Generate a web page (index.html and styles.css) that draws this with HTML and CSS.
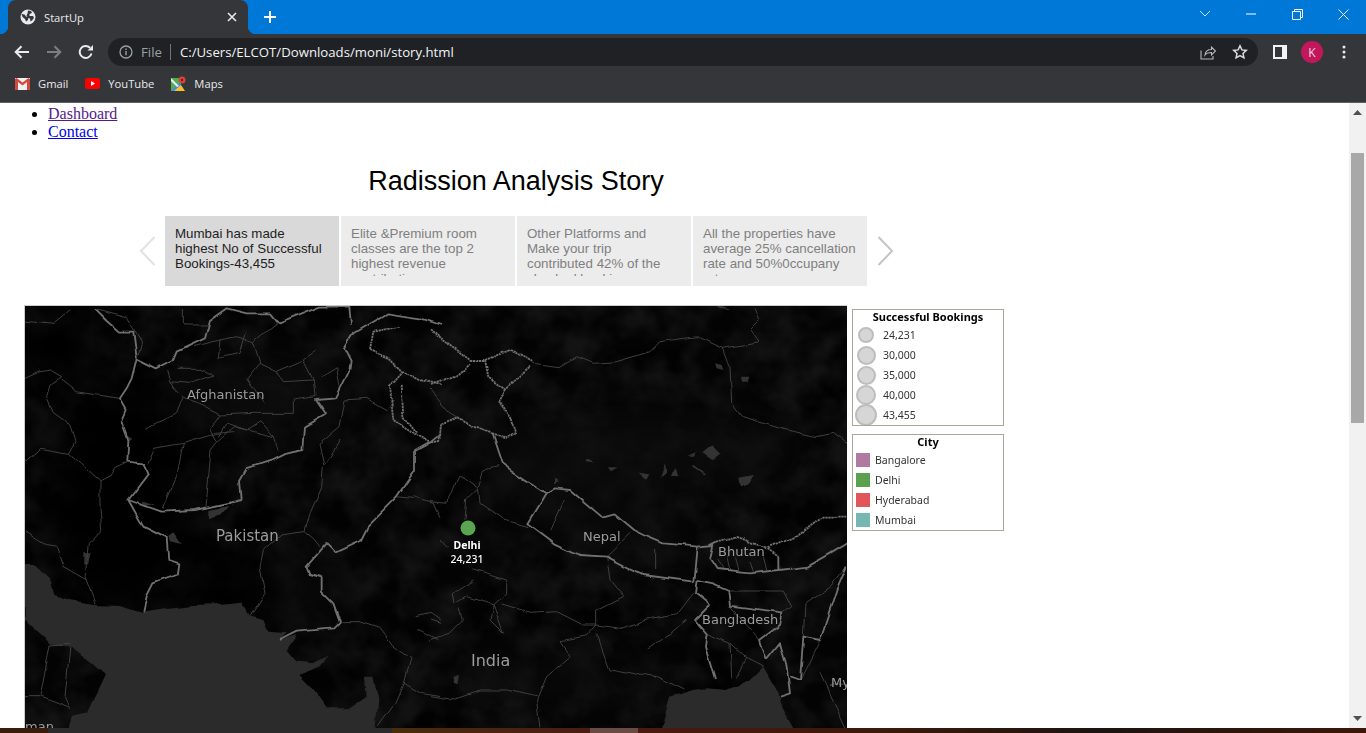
FILE: index.html
```html
<!DOCTYPE html>
<html lang="en">
  <head>
    <meta charset="UTF-8" />
    <meta name="viewport" content="width=device-width, initial-scale=1.0" />
    <title>StartUp</title>
    <link rel="stylesheet" href="styles.css">
  </head>

  <body>
    <div class="window">
      <!-- title bar -->
      <div class="tabbar">
        <div class="tab">
          <svg class="globe" width="16" height="16" viewBox="0 0 16 16"><circle cx="8" cy="8" r="7.500" fill="#e8eaed"/><path d="M1.500 5l3 .5 1.500 2 2.500 1-.5 2.500-2 1.500-1-2.500-2.500-2zM8 1.500l3 .5 1 2-2.500 1 0 2 3.500 0 1 2-2 2.500-1.500 1-.5-3-2.500-1-1-2 1-2z" fill="#35363a"/></svg>
          <span class="tab-title">StartUp</span>
          <svg class="tab-close" width="10" height="10" viewBox="0 0 10 10"><path d="M1 1l8 8M9 1l-8 8" stroke="#e8eaed" stroke-width="1.600"/></svg>
        </div>
        <svg class="new-tab" width="12" height="12" viewBox="0 0 12 12"><path d="M6 0v12M0 6h12" stroke="#fff" stroke-width="2"/></svg>
        <div class="win-controls">
          <div class="win-btn"><svg width="12" height="8" viewBox="0 0 12 8"><path d="M1 1l5 5 5-5" fill="none" stroke="#cfe4f7" stroke-width="1"/></svg></div>
          <div class="win-btn"><svg width="10" height="2" viewBox="0 0 10 2"><path d="M0 1h10" stroke="#fff" stroke-width="1"/></svg></div>
          <div class="win-btn"><svg width="11" height="11" viewBox="0 0 11 11"><path d="M.5 2.500h8v8h-8zM2.500 2.500v-2h8v8h-2" fill="none" stroke="#fff" stroke-width="1"/></svg></div>
          <div class="win-btn"><svg width="11" height="11" viewBox="0 0 11 11"><path d="M.5.5l10 10M10.500.5l-10 10" stroke="#fff" stroke-width="1"/></svg></div>
        </div>
      </div>

      <!-- toolbar -->
      <div class="toolbar">
        <div class="tool-btn"><svg width="16" height="14" viewBox="0 0 16 14"><path d="M15 7H2M7.500 1.200L1.700 7l5.800 5.800" fill="none" stroke="#e8eaed" stroke-width="2"/></svg></div>
        <div class="tool-btn"><svg width="16" height="14" viewBox="0 0 16 14"><path d="M1 7h13M8.500 1.200L14.300 7l-5.800 5.800" fill="none" stroke="#7c7e82" stroke-width="2"/></svg></div>
        <div class="tool-btn"><svg width="16" height="16" viewBox="0 0 16 16"><path d="M13.500 9.500A6 6 0 1 1 12 3.800" fill="none" stroke="#e8eaed" stroke-width="2"/><path d="M9.500 6.500h5.500V1z" fill="#e8eaed"/></svg></div>
        <div class="omnibox">
          <svg width="14" height="14" viewBox="0 0 14 14"><circle cx="7" cy="7" r="6" fill="none" stroke="#9aa0a6" stroke-width="1.300"/><path d="M7 6v4.200M7 3.500v1.400" stroke="#9aa0a6" stroke-width="1.400"/></svg>
          <span class="scheme">File</span>
          <span class="omni-sep"></span>
          <span class="url">C:/Users/ELCOT/Downloads/moni/story.html</span>
          <span class="omni-icons">
            <svg width="16" height="16" viewBox="0 0 16 16"><path d="M1 6.500V15h12v-3M5 11c.5-4 3-5.500 6.500-5.500V3L15.500 7l-4 4V8.500C9 8.500 6.500 9 5 11z" fill="none" stroke="#b5b8bc" stroke-width="1.100"/></svg>
            <svg width="16" height="16" viewBox="0 0 16 16"><path d="M8 1.800l1.900 4.100 4.400.5-3.300 3 .9 4.400L8 11.600l-3.900 2.200.9-4.400-3.300-3 4.400-.5z" fill="none" stroke="#dadce0" stroke-width="1.500"/></svg>
          </span>
        </div>
        <div class="tool-right">
          <div class="tool-btn"><svg width="14" height="14" viewBox="0 0 14 14"><path d="M0 0h14v14H0z" fill="#f1f3f4"/><path d="M2 2h7v10H2z" fill="#35363a"/></svg></div>
          <div class="tool-btn"><span class="avatar">K</span></div>
          <div class="tool-btn"><svg width="4" height="14" viewBox="0 0 4 14"><circle cx="2" cy="2" r="1.500" fill="#e8eaed"/><circle cx="2" cy="7" r="1.500" fill="#e8eaed"/><circle cx="2" cy="12" r="1.500" fill="#e8eaed"/></svg></div>
        </div>
      </div>

      <!-- bookmarks -->
      <div class="bookmarks">
        <div class="bookmark">
          <svg width="15" height="12" viewBox="0 0 15 12"><path d="M0 0h15v12H0z" fill="#f1f1f1"/><path d="M0 1v11h3V4l4.500 3.500L12 4v8h3V1l-1.500-1-6 4.500L1.500 0z" fill="#d4493e"/></svg>
          <span>Gmail</span>
        </div>
        <div class="bookmark">
          <svg width="15" height="11" viewBox="0 0 15 11"><rect width="15" height="11" rx="2.500" fill="#f00"/><path d="M6 3l4 2.500L6 8z" fill="#fff"/></svg>
          <span>YouTube</span>
        </div>
        <div class="bookmark">
          <svg width="15" height="15" viewBox="0 0 15 15"><path d="M0 2h10v13H0z" fill="#4caf50"/><path d="M0 15L10 6v9z" fill="#4285f4"/><path d="M3 15l7-6 4 6z" fill="#fbc02d"/><path d="M0 2l8 8-2 1-6-6z" fill="#eee"/><circle cx="11" cy="4" r="3.500" fill="#db4437"/><circle cx="11" cy="4" r="1.200" fill="#7a1d15"/></svg>
          <span>Maps</span>
        </div>
      </div>

      <!-- page -->
      <div class="viewport">
        <div class="page">
          <ul class="nav">
            <li><a class="visited" href="#">Dashboard</a></li>
            <li><a href="#">Contact</a></li>
          </ul>

          <div class="story">
            <h1 class="story-title">Radission Analysis Story</h1>

            <div class="flow">
              <svg class="flow-arrow" width="17" height="30" viewBox="0 0 17 30"><path d="M15.500 1L2 15l13.500 14" fill="none" stroke="#e2e2e2" stroke-width="2"/></svg>
              <div class="flow-point current"><div class="flow-text">Mumbai has made highest No of Successful Bookings-43,455</div></div>
              <div class="flow-point"><div class="flow-text">Elite &amp;Premium room classes are the top 2 highest revenue contribution</div></div>
              <div class="flow-point"><div class="flow-text">Other Platforms and Make your trip contributed 42% of the checked bookings</div></div>
              <div class="flow-point"><div class="flow-text">All the properties have average 25% cancellation rate and 50%0ccupany rate</div></div>
              <svg class="flow-arrow" width="17" height="30" viewBox="0 0 17 30"><path d="M1.500 1L15 15 1.500 29" fill="none" stroke="#c4c4c4" stroke-width="2"/></svg>
            </div>

            <div class="viz">
              <svg class="map" width="822" height="440" viewBox="25 306 822 440" color-interpolation-filters="sRGB">
                <defs>
                  <filter id="soft" x="-60%" y="-60%" width="220%" height="220%"><feGaussianBlur stdDeviation="24"/></filter>
                  <filter id="blotch" x="0" y="0" width="100%" height="100%">
                    <feTurbulence type="fractalNoise" baseFrequency="0.03" numOctaves="3" seed="7"/>
                    <feColorMatrix type="matrix" values="0 0 0 0 0.075  0 0 0 0 0.075  0 0 0 0 0.075  2.400 0 0 0 -0.850"/>
                  </filter>
                  <filter id="wiggle">
                    <feTurbulence type="fractalNoise" baseFrequency="0.045" numOctaves="2" seed="3"/>
                    <feDisplacementMap in="SourceGraphic" scale="6" xChannelSelector="R" yChannelSelector="G"/>
                  </filter>
                </defs>
                <rect x="25" y="306" width="822" height="440" fill="#030303"/>
                <rect x="25" y="306" width="822" height="440" filter="url(#blotch)"/>
                <g filter="url(#soft)" fill="#0d0d0d" opacity=".7">
                  <ellipse cx="260" cy="400" rx="110" ry="45"/>
                  <ellipse cx="600" cy="530" rx="130" ry="26" transform="rotate(22 600 530)"/>
                  <ellipse cx="640" cy="450" rx="170" ry="50"/>
                  <ellipse cx="310" cy="590" rx="40" ry="50"/>
                  <ellipse cx="560" cy="680" rx="130" ry="25"/>
                </g>
                <g fill="#000">
                  <ellipse cx="120" cy="500" rx="70" ry="120" filter="url(#soft)"/>
                  <ellipse cx="230" cy="600" rx="45" ry="45" filter="url(#soft)"/>
                  <ellipse cx="60" cy="350" rx="40" ry="40" filter="url(#soft)"/>
                </g>

                <g filter="url(#wiggle)">
                <!-- left half, traced at 3x -->
                <g transform="translate(20 300) scale(.33333)" fill="none" stroke-linejoin="round">
                  <path fill="#2b2b2b" d="M14 795L50 795 85 830 100 885 150 900 220 912 300 915 365 935 430 925 520 915 600 912 660 905 690 950 730 960 745 995 800 1000 780 1020 830 1005 800 1050 830 1085 880 1090 930 1065 900 1100 835 1125 880 1170 920 1225 990 1225 1040 1190 1035 1130 1060 1130 1075 1200 1065 1300 135 1300 160 1250 200 1240 255 1125 215 1090 150 1040 90 1030 45 990 14 960Z"/>
                  <g fill="#333">
                    <path d="M365 605l40 5-30 10z"/>
                    <path d="M565 630l60-12-20 25-40 12z"/>
                    <path d="M445 710l15-10 25 35-35-8z"/>
                    <path d="M190 760h22l-8 30h-14z"/>
                    <path d="M322 405l15 8-12 10z"/>
                  </g>
                  <g stroke="#444" stroke-width="2.800">
                    <path d="M15 235L60 215 90 210 125 230 90 255 80 290 100 335 135 360 150 380 165 425 145 460 60 445 15 485"/>
                    <path d="M145 460L240 545 240 620 245 690 205 730 195 830 225 910"/>
                    <path d="M240 545L270 530 285 505 322 488M125 240L170 275 230 285 298 295"/>
                    <path d="M15 695L80 740 110 745 130 800 200 840M15 60L100 70 150 30M225 25L320 50 365 130 350 175"/>
                    <path d="M490 30V75L565 75M490 430L470 530 430 625M590 425L570 450 555 620M380 490L400 445 490 430 590 400 640 395"/>
                    <path d="M910 500L905 560 870 640 855 695 780 705 730 750 720 800 735 880 690 950M855 695L880 715 900 740"/>
                    <path d="M1180 590L1200 600 1240 610 1260 650M1130 590L1180 595"/>
                    <path d="M965 965L1020 965 1080 985 1120 1040 1170 1075 1150 1150 1200 1180 1260 1190M1150 1150L1125 1210 1075 1280"/>
                    <path d="M90 1035L60 1190 150 1225M150 1040L135 1190 150 1225M15 1190L60 1190M90 1035L150 1030"/>
                    <path d="M1190 950L1230 940 1260 960M1195 985L1260 1020"/>
                    <path d="M440 210L450 245 510 250 585 225 545 205 470 205M520 140L600 120 650 110 700 125 770 70M600 120L595 175 660 160 680 95"/>
                    <path d="M450 245L490 290 470 340 375 385M490 290L600 345 700 340M600 345L570 390 590 425 640 380 700 395 760 410 775 455"/>
                    <path d="M700 125L720 190 770 215 850 180 890 150M770 215L790 245 880 240 885 290 820 300 820 340 700 340M720 190L680 240 700 270 730 310M850 180L880 240"/>
                    <path d="M900 230L950 200 960 260M900 430L960 380 975 300 1040 295 1100 330 1120 300M900 430L915 495 960 420"/>
                    <path d="M595 410L620 370 680 390 720 365 760 410"/>
                  </g>
                  <g stroke="#707070" stroke-width="5.500">
                    <path d="M225 25L260 60 300 95 340 95 350 175 410 205 460 180 470 155 555 115 570 60 620 25 680 40 750 40 775 70 850 40 900 20 985 20 990 80"/>
                    <path d="M350 175L335 235 320 265 300 295 320 330 305 365 325 420 322 485 370 490 385 520 325 600 370 680 440 715 445 780 475 790 470 825 400 850 380 890 370 935"/>
                    <path d="M325 600L425 635 525 630 665 600 660 540 680 505 760 480 800 460 850 450 855 380 915 345 885 300 950 295 990 215 995 180 975 140 1000 100 1100 40 1200 55 1260 75"/>
                    <path d="M1260 400L1230 425 1185 450 1185 510 1130 590 1080 640 1040 680 1020 720 945 755 920 730 860 800 870 825 905 835 905 875 940 910 960 965 940 985 830 995 780 1020"/>
                  </g>
                  <g stroke="#707070" stroke-width="5.500" stroke-dasharray="7 2">
                    <path d="M1050 150L1060 95 1140 80M1050 150L1110 175 1150 215 1200 240 1260 255M1150 215L1110 260 1120 360 1180 400 1230 425M1145 260L1150 350 1190 400"/>
                  </g>
                </g>

                <!-- right half, traced at 3x -->
                <g transform="translate(430 300) scale(.33333)" fill="none" stroke-linejoin="round">
                  <path fill="#2b2b2b" d="M690 1300L720 1190 790 1170 830 1165 890 1170 960 1140 1000 1100 1040 1170 1050 1210 1100 1300Z"/>
                  <g fill="#333">
                    <path d="M820 460l30-25 25 25-25 20z"/>
                    <path d="M925 530l50-8-20 30-25 5z"/>
                    <path d="M620 515l35 5-10 18z"/>
                    <path d="M690 535l15-45 5 30z"/>
                    <path d="M725 525l15-20 8 20z"/>
                    <path d="M790 495l35 25-5 3-35-25z"/>
                    <path d="M465 480l30 5-25-15z"/>
                    <path d="M530 505h30l-20 12z"/>
                    <path d="M775 470l25-10-5 10z"/>
                    <path d="M855 190l20 5 5 15-20-5z"/>
                    <path d="M930 230h28l-5 15-20 0z"/>
                    <path d="M375 535l15 12-15 5z"/>
                    <path d="M855 15l50 15-40-3z"/>
                    <path d="M70 1130l20-5-5 25-10-5z"/>
                  </g>
                  <g stroke="#444" stroke-width="2.800">
                    <path d="M310 190L390 200 440 170 490 190 560 185 660 155 690 125 800 110 880 145 985 125 960 90 990 60 975 25"/>
                    <path d="M880 145L900 200 905 310 935 350 1050 385 1160 410 1210 400 1250 430"/>
                    <path d="M145 565L160 510 205 500M145 565L110 600 105 660M145 565L150 610 220 660 295 680M0 605L50 610 90 525 145 565M0 270L60 340 85 355"/>
                    <path d="M130 810L230 840 230 880 190 915 110 890 75 910 70 880 130 840M190 915L180 960 220 1000 190 915"/>
                    <path d="M215 915L300 940 380 935 460 975 500 975 570 985 650 960 740 945 790 880"/>
                    <path d="M500 975L500 930 580 890 540 840 530 770M500 975L470 1010 390 1025 420 1070 350 1130 320 1200 330 1290"/>
                    <path d="M0 1190L60 1200 150 1170 230 1170 320 1190M500 1000L540 1110 620 1125 660 1120 760 1170M650 1050L770 960"/>
                    <path d="M0 1020L60 1000 100 960 90 925M0 960L30 970M530 770L600 700M400 600L360 690M680 750L680 810M30 720L50 745"/>
                    <path d="M860 780L880 810M890 770L900 815M920 770L930 815M960 780L970 815M1000 770L1010 810"/>
                    <path d="M900 870L1060 870 1085 920 1060 940M900 920L990 1020M830 1000L900 1030 950 1075 1000 1100M900 1030L905 1130M950 1075L920 1130"/>
                    <path d="M1110 1140L1170 1020M1120 1010L1125 910 1200 860 1250 800M1170 1120L1250 1290M1200 1160L1250 1150"/>
                  </g>
                  <g stroke="#707070" stroke-width="5.500">
                    <path d="M185 400L215 490 250 515 350 580 295 670 375 730 450 765 530 770 640 825 790 845 800 740 700 730 640 705 610 690 550 640 515 650 420 570 375 565 350 580"/>
                    <path d="M800 840L850 850 895 870 900 920 1060 940 1050 975 990 1020 1010 1080 1050 1030 1070 1100 1080 1180 1050 1190"/>
                    <path d="M800 840L795 880 840 915 795 960 830 1000 825 1040 855 1140"/>
                    <path d="M1080 1130L1110 1140 1120 1010 1170 1020 1220 870 1250 800"/>
                    <path d="M840 735L860 725M1045 810L960 820 860 810 840 780 850 735 800 740M1045 770L1045 810 1130 800 1200 760 1250 730"/>
                  </g>
                  <g stroke="#707070" stroke-width="5.500" stroke-dasharray="7 2">
                    <path d="M0 85L40 120 120 180 165 180 240 150 310 185M165 180L175 230 225 265 300 200M0 255L80 225 120 190M225 265L205 300 240 350 255 400 225 415 185 400 130 380 85 355 30 375 25 420 0 425"/>
                    <path d="M860 725L920 710 1010 745 1045 770M1015 745L1100 710 1180 650 1250 650"/>
                  </g>
                </g>
                </g>

                <g class="map-labels">
                  <text x="187" y="399" font-size="13">Afghanistan</text>
                  <text x="216" y="541" font-size="15">Pakistan</text>
                  <text x="583" y="541" font-size="13">Nepal</text>
                  <text x="718" y="556" font-size="13">Bhutan</text>
                  <text x="702" y="624" font-size="13">Bangladesh</text>
                  <text x="471" y="666" font-size="16">India</text>
                  <text x="831" y="687" font-size="13">My</text>
                  <text x="25" y="731" font-size="13">man</text>
                </g>
                <circle cx="468" cy="528" r="7.500" fill="#5aa550"/>
                <g class="map-mark">
                  <text x="467" y="549" font-weight="700">Delhi</text>
                  <text x="467" y="563" font-weight="500">24,231</text>
                </g>
              </svg>

              <div class="legends">
                <div class="legend">
                  <div class="legend-title">Successful Bookings</div>
                  <div class="legend-row"><span class="bubble-cell"><i class="bubble b1"></i></span><span class="size-label">24,231</span></div>
                  <div class="legend-row"><span class="bubble-cell"><i class="bubble b2"></i></span><span class="size-label">30,000</span></div>
                  <div class="legend-row"><span class="bubble-cell"><i class="bubble b2"></i></span><span class="size-label">35,000</span></div>
                  <div class="legend-row"><span class="bubble-cell"><i class="bubble b3"></i></span><span class="size-label">40,000</span></div>
                  <div class="legend-row"><span class="bubble-cell"><i class="bubble b4"></i></span><span class="size-label">43,455</span></div>
                </div>
                <div class="legend">
                  <div class="legend-title">City</div>
                  <div class="legend-row"><i class="swatch bangalore"></i>Bangalore</div>
                  <div class="legend-row"><i class="swatch delhi"></i>Delhi</div>
                  <div class="legend-row"><i class="swatch hyderabad"></i>Hyderabad</div>
                  <div class="legend-row"><i class="swatch mumbai"></i>Mumbai</div>
                </div>
              </div>
            </div>
          </div>
        </div>

        <div class="scrollbar">
          <svg width="9" height="5" viewBox="0 0 9 5"><path d="M4.500 0L9 5H0z" fill="#505050"/></svg>
          <div class="scroll-thumb"></div>
          <svg class="scroll-down" width="9" height="5" viewBox="0 0 9 5"><path d="M0 0h9L4.500 5z" fill="#505050"/></svg>
        </div>
      </div>

      <div class="taskbar-edge"></div>
    </div>
  </body>
</html>
```

FILE: styles.css
```css
html,
body {
  margin: 0;
  height: 100%;
  overflow: hidden;
}

svg {
  display: block;
  flex: none;
}

.window {
  display: flex;
  flex-direction: column;
  height: 733px;
  font-family: "Open Sans", "Noto Sans", sans-serif;
}

/* title bar */
.tabbar {
  display: flex;
  align-items: center;
  flex: none;
  height: 34px;
  background-color: #0078d7;
}

.tab {
  position: relative;
  display: flex;
  align-items: center;
  align-self: stretch;
  width: 240px;
  margin-left: 8px;
  padding: 0 11px 0 12px;
  box-sizing: border-box;
  background-color: #35363a;
  border-radius: 8px 8px 0 0;
  color: #e8eaed;
  font-size: 11.200px;
}

.tab::before,
.tab::after {
  content: "";
  position: absolute;
  bottom: 0;
  width: 8px;
  height: 8px;
}

.tab::before {
  left: -8px;
  background: radial-gradient(circle at 0 0, transparent 8px, #35363a 8.500px);
}

.tab::after {
  right: -8px;
  background: radial-gradient(circle at 100% 0, transparent 8px, #35363a 8.500px);
}

.tab-title {
  flex: 1;
  margin-left: 8px;
}

.new-tab {
  margin-left: 16px;
}

.win-controls {
  display: flex;
  margin-left: auto;
  align-self: flex-start;
}

.win-btn {
  display: flex;
  align-items: center;
  justify-content: center;
  width: 46px;
  height: 28px;
}

/* toolbar */
.toolbar {
  display: flex;
  align-items: center;
  flex: none;
  height: 36px;
  padding: 0 6px;
  box-sizing: border-box;
  background-color: #35363a;
}

.tool-btn {
  display: flex;
  align-items: center;
  justify-content: center;
  width: 32px;
  height: 32px;
}

.omnibox {
  display: flex;
  align-items: center;
  flex: 1;
  height: 28px;
  margin-left: 6px;
  padding: 0 10px 0 11px;
  background-color: #202124;
  border-radius: 14px;
  font-size: 13.200px;
}

.scheme {
  margin-left: 8px;
  color: #9aa0a6;
}

.omni-sep {
  width: 1px;
  height: 16px;
  margin: 0 9px 0 8px;
  background-color: #70757a;
}

.url {
  color: #f1f3f4;
}

.omni-icons {
  display: flex;
  gap: 16px;
  margin-left: auto;
}

.tool-right {
  display: flex;
  margin-left: 6px;
}

.avatar {
  display: flex;
  align-items: center;
  justify-content: center;
  width: 22px;
  height: 22px;
  border-radius: 50%;
  background-color: #c2185b;
  color: #f6d5e2;
  font-size: 12px;
}

/* bookmarks */
.bookmarks {
  display: flex;
  align-items: center;
  gap: 17px;
  flex: none;
  height: 33px;
  padding: 0 0 5px 15px;
  box-sizing: border-box;
  background-color: #35363a;
  border-bottom: 1px solid #5f6064;
  color: #e8eaed;
  font-size: 11.200px;
}

.bookmark {
  display: flex;
  align-items: center;
  gap: 8px;
}

/* page */
.viewport {
  display: flex;
  flex: 1;
  min-height: 0;
  background-color: #fff;
}

.page {
  flex: 1;
  overflow: hidden;
  padding: 2px 0 0 8px;
  font-family: "Liberation Serif", serif;
  font-size: 16px;
}

.nav {
  margin: 0;
  padding-left: 40px;
  line-height: 18px;
}

.nav a {
  color: #00e;
}

.nav a.visited {
  color: #551a8b;
}

.story {
  width: 1016px;
}

.story-title {
  margin: 0;
  padding-top: 23px;
  font-family: "Liberation Sans", Arial, sans-serif;
  font-size: 27px;
  font-weight: 400;
  line-height: 34px;
  text-align: center;
}

.flow {
  display: flex;
  align-items: center;
  gap: 2px;
  height: 70px;
  margin-top: 18px;
  padding-left: 131px;
  font-family: "Liberation Sans", Arial, sans-serif;
  font-size: 13.330px;
}

.flow-arrow:first-child {
  margin-right: 7px;
}

.flow-arrow:last-child {
  margin-left: 8px;
}

.flow-point {
  width: 174px;
  height: 70px;
  padding-top: 10px;
  box-sizing: border-box;
  background-color: #ececec;
  color: #808080;
}

.flow-point.current {
  background-color: #d9d9d9;
  color: #1e1e1e;
}

.flow-text {
  height: 50px;
  padding: 0 10px;
  overflow: hidden;
  line-height: 15px;
}

.viz {
  display: flex;
  margin: 19px 0 0 16px;
}

.map {
  border-top: 1px solid #ccc;
  border-left: 1px solid #ccc;
}

.map-labels text {
  fill: #9c9c9c;
  font-family: "DejaVu Sans", sans-serif;
}

.map-mark text {
  fill: #fff;
  font-family: "Noto Sans", sans-serif;
  font-size: 10.500px;
  text-anchor: middle;
}

.legends {
  display: flex;
  flex-direction: column;
  gap: 8px;
  width: 152px;
  margin-left: 5px;
  padding-top: 4px;
  font-family: "Noto Sans", sans-serif;
  font-size: 10.500px;
  color: #333;
}

.legend {
  overflow: hidden;
  border: 1px solid #aaa795;
}

.legend-title {
  height: 15px;
  color: #000;
  font-size: 11px;
  font-weight: 700;
  line-height: 13px;
  text-align: center;
}

.legend-row {
  display: flex;
  align-items: center;
  height: 20px;
}

.bubble-cell {
  display: flex;
  justify-content: center;
  width: 26px;
}

.size-label {
  margin-left: 4px;
}

.bubble {
  display: block;
  flex: none;
  box-sizing: border-box;
  border: 2px solid #bdbdbd;
  border-radius: 50%;
  background-color: #d6d6d6;
}

.b1 { width: 16px; height: 16px; }
.b2 { width: 19px; height: 19px; }
.b3 { width: 20px; height: 20px; }
.b4 { width: 22px; height: 22px; }

.swatch {
  width: 14px;
  height: 14px;
  margin: 0 5px 0 3px;
}

.bangalore { background-color: #b07aa1; }
.delhi { background-color: #59a14f; }
.hyderabad { background-color: #e15759; }
.mumbai { background-color: #76b7b2; }

/* scrollbar */
.scrollbar {
  position: relative;
  display: flex;
  flex-direction: column;
  align-items: center;
  flex: none;
  width: 17px;
  padding-top: 7px;
  box-sizing: border-box;
  background-color: #f1f1f1;
}

.scroll-thumb {
  width: 13px;
  height: 270px;
  margin-top: 38px;
  background-color: #a8a8a8;
}

.scroll-down {
  margin-top: auto;
  margin-bottom: 7px;
}

/* the taskbar just shows under the window */
.taskbar-edge {
  flex: none;
  height: 5px;
  background: linear-gradient(90deg, #3a1c0c 0, #3a1c0c 48px, #2b2b2b 48px, #2b2b2b 392px, #4a2c0c 392px, #4a1c14 590px, #6b4a45 590px, #6b4a45 638px, #4a1a0e 638px, #3a180a 900px, #1c1410 1100px, #3d1608 1366px);
}
```
